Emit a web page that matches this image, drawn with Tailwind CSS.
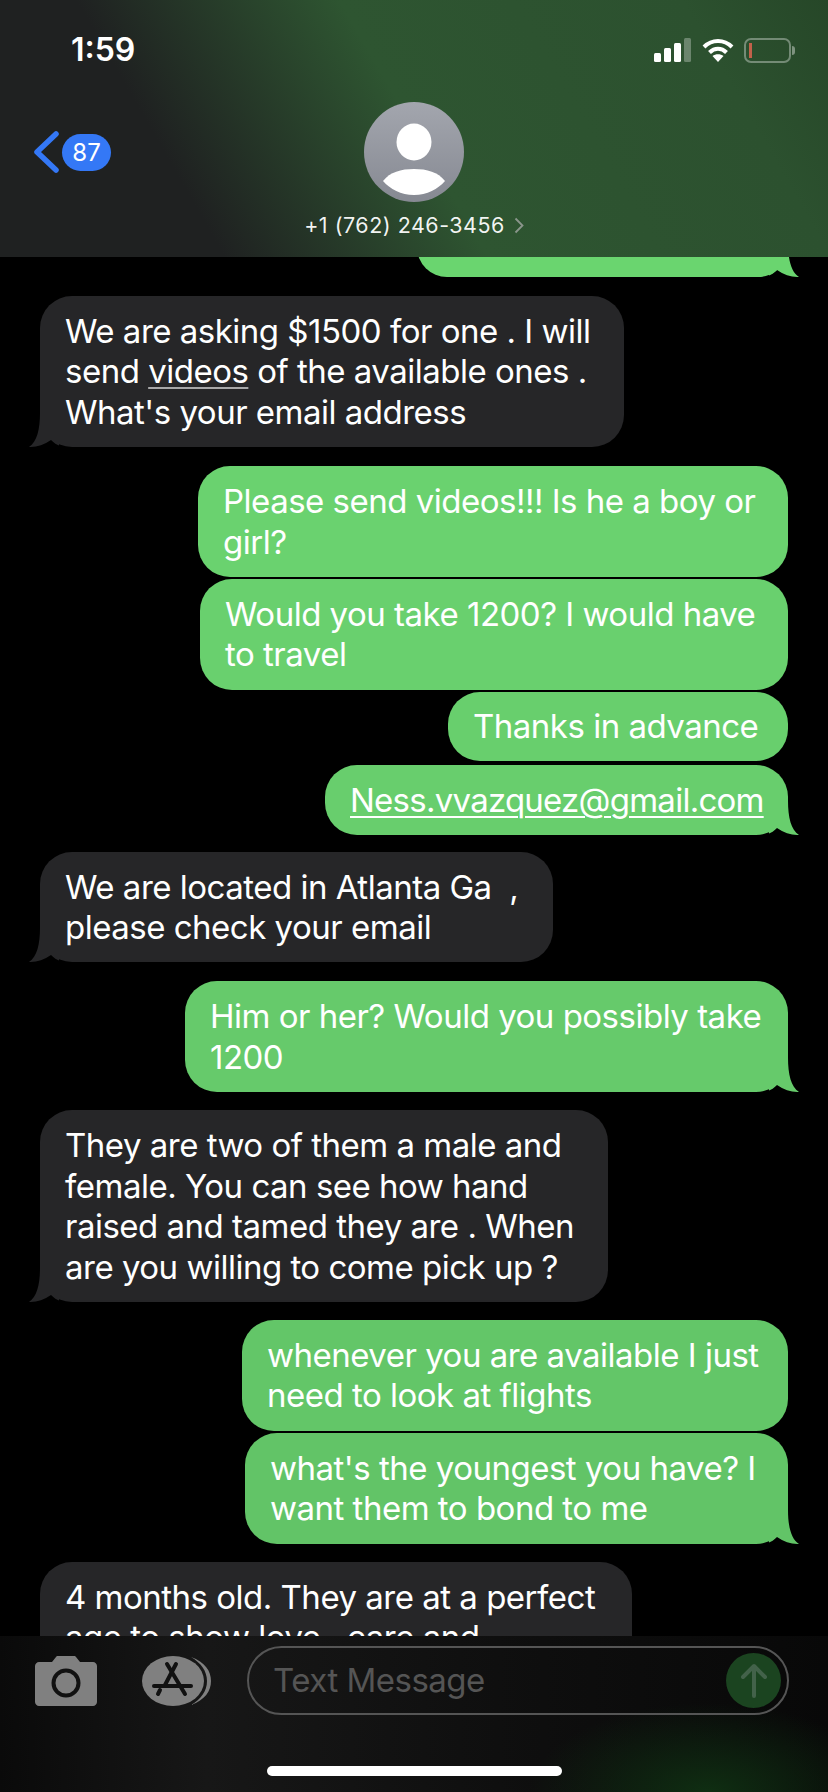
<!DOCTYPE html>
<html lang="en">
<head>
  <meta charset="UTF-8" />
  <meta name="viewport" content="width=device-width, initial-scale=1.0"/>
  <title>Messages</title>
  <script src="https://cdn.jsdelivr.net/npm/@tailwindcss/browser@4"></script>
</head>
<body class="bg-black">
  <svg class="hidden">
    <symbol id="tail" viewBox="0 0 30 34" overflow="visible">
      <path d="M19 0C19 16 22 29 30 34C23 34.500 15 32 8 27C5 30 2 32 0 32.500L0 0Z" fill="currentColor"/>
    </symbol>
  </svg>

  <div class="w-[828px] h-[1792px] flex flex-col overflow-hidden font-['Inter','Liberation_Sans',sans-serif] text-white">

    <!-- Header -->
    <header class="relative z-10 h-[257px] shrink-0 bg-[linear-gradient(60deg,#1f2121_0%,#1f2121_23%,#2e5531_50%,#2c512f_85%,#264728_100%)]">
      <div class="flex items-center justify-between pl-[71px] pr-[37px] pt-[32px]">
        <span class="text-[32px] leading-[36px] font-semibold">1:59</span>
        <div class="flex items-center">
          <svg width="38" height="24" viewBox="0 0 38 24">
            <rect x="0" y="15" width="7" height="9" rx="1.500" fill="#fff"/>
            <rect x="10" y="10" width="7" height="14" rx="1.500" fill="#fff"/>
            <rect x="20" y="5" width="7" height="19" rx="1.500" fill="#fff"/>
            <rect x="30" y="0" width="7" height="24" rx="1.500" fill="#fff" fill-opacity=".3"/>
          </svg>
          <svg class="ml-[10px]" width="32" height="24" viewBox="0 0 32 24" fill="none" stroke="#fff" stroke-width="4">
            <path d="M2 9C10 1 22 1 30 9"/>
            <path d="M7.500 14.500C12.500 9.500 19.500 9.500 24.500 14.500"/>
            <path d="M16 24L10.500 18C13.500 15.500 18.500 15.500 21.500 18Z" fill="#fff" stroke="none"/>
          </svg>
          <div class="ml-[10px] relative w-[47px] h-[25px] rounded-[7px] border-2 border-white/35">
            <div class="absolute left-[3px] top-[3px] bottom-[3px] w-[3px] bg-[#c2614a]"></div>
            <div class="absolute -right-[6px] top-[6px] w-[3px] h-[9px] rounded-r-full bg-white/40"></div>
          </div>
        </div>
      </div>

      <!-- Back + badge -->
      <div class="absolute left-[33px] top-[131px] flex items-center">
        <svg width="26" height="42" viewBox="0 0 26 42" fill="none" stroke="#3478f6" stroke-width="5.500" stroke-linecap="round" stroke-linejoin="round">
          <path d="M23 3L4 21L23 39"/>
        </svg>
        <div class="ml-[3px] w-[49px] h-[37px] rounded-full bg-[#3478f6] text-[24px] leading-[37px] text-center">87</div>
      </div>

      <!-- Contact -->
      <div class="absolute left-0 right-0 top-[102px] flex flex-col items-center">
        <svg width="100" height="100" viewBox="0 0 100 100">
          <defs>
            <linearGradient id="avatar" x1="0" y1="0" x2="0" y2="1">
              <stop offset="0" stop-color="#a3a6ae"/>
              <stop offset="1" stop-color="#868992"/>
            </linearGradient>
          </defs>
          <circle cx="50" cy="50" r="50" fill="url(#avatar)"/>
          <ellipse cx="50" cy="40" rx="17.500" ry="18.500" fill="#fff"/>
          <path d="M19 79C26 70 37 67 50 67C63 67 74 70 81 79C74 87 63 93 50 93C37 93 26 87 19 79Z" fill="#fff"/>
        </svg>
        <div class="mt-[9px] flex items-center text-[21.500px] leading-[28px] tracking-[0.5px] text-white/95">
          <span>+1 (762) 246-3456</span>
          <svg class="ml-[9px]" width="10" height="17" viewBox="0 0 10 17" fill="none" stroke="#8b968c" stroke-width="1.800">
            <path d="M1.500 1.500L8.500 8.500L1.500 15.500"/>
          </svg>
        </div>
      </div>
    </header>

    <!-- Conversation -->
    <main class="flex-1 min-h-0 overflow-hidden flex flex-col text-[33px] leading-[40.400px] tracking-[-0.5px] whitespace-nowrap">
      <div class="relative shrink-0 self-end mr-[40px] -mt-[40px] w-[371px] h-[60px] rounded-[30px] bg-[#6ad56f] text-[#6ad56f]">
        <svg class="absolute -right-[11px] bottom-0 overflow-visible" width="30" height="34"><use href="#tail"/></svg>
      </div>

      <div class="relative shrink-0 self-start ml-[40px] mt-[19px] w-[584px] px-[25px] py-[15px] rounded-[32px] bg-[#262628] text-[#262628]">
        <p class="text-white">We are asking $1500 for one . I will<br>send <span class="underline decoration-2 underline-offset-4 decoration-white/60">videos</span> of the available ones .<br>What's your email address</p>
        <svg class="absolute -left-[11px] bottom-0 overflow-visible -scale-x-100" width="30" height="34"><use href="#tail"/></svg>
      </div>

      <div class="shrink-0 self-end mr-[40px] mt-[19px] w-[590px] px-[25px] py-[15px] rounded-[32px] bg-[#6ad26f]">Please send videos!!! Is he a boy or<br>girl?</div>
      <div class="shrink-0 self-end mr-[40px] mt-[2px] w-[588px] px-[25px] py-[15px] rounded-[32px] bg-[#69d06e]">Would you take 1200? I would have<br>to travel</div>
      <div class="shrink-0 self-end mr-[40px] mt-[2px] w-[340px] px-[25px] py-[14.500px] rounded-[32px] bg-[#68cf6d]">Thanks in advance</div>
      <div class="relative shrink-0 self-end mr-[40px] mt-[4px] w-[463px] px-[25px] py-[14.500px] rounded-[32px] bg-[#68ce6d] text-[#68ce6d]">
        <p class="text-white underline decoration-2 underline-offset-4 tracking-[-0.75px]">Ness.vvazquez@gmail.com</p>
        <svg class="absolute -right-[11px] bottom-0 overflow-visible" width="30" height="34"><use href="#tail"/></svg>
      </div>

      <div class="relative shrink-0 self-start ml-[40px] mt-[17px] w-[513px] px-[25px] py-[15px] rounded-[32px] bg-[#262628] text-[#262628]">
        <p class="text-white">We are located in Atlanta Ga &nbsp;,<br>please check your email</p>
        <svg class="absolute -left-[11px] bottom-0 overflow-visible -scale-x-100" width="30" height="34"><use href="#tail"/></svg>
      </div>

      <div class="relative shrink-0 self-end mr-[40px] mt-[19px] w-[603px] px-[25px] py-[15px] rounded-[32px] bg-[#66ca6b] text-[#66ca6b]">
        <p class="text-white">Him or her? Would you possibly take<br>1200</p>
        <svg class="absolute -right-[11px] bottom-0 overflow-visible" width="30" height="34"><use href="#tail"/></svg>
      </div>

      <div class="relative shrink-0 self-start ml-[40px] mt-[18px] w-[568px] px-[25px] py-[15px] rounded-[32px] bg-[#262628] text-[#262628]">
        <p class="text-white">They are two of them a male and<br>female. You can see how hand<br>raised and tamed they are . When<br>are you willing to come pick up ?</p>
        <svg class="absolute -left-[11px] bottom-0 overflow-visible -scale-x-100" width="30" height="34"><use href="#tail"/></svg>
      </div>

      <div class="shrink-0 self-end mr-[40px] mt-[18px] w-[546px] px-[25px] py-[15px] rounded-[32px] bg-[#63c668]">whenever you are available I just<br>need to look at flights</div>
      <div class="relative shrink-0 self-end mr-[40px] mt-[2px] w-[543px] px-[25px] py-[15px] rounded-[32px] bg-[#62c467] text-[#62c467]">
        <p class="text-white">what's the youngest you have? I<br>want them to bond to me</p>
        <svg class="absolute -right-[11px] bottom-0 overflow-visible" width="30" height="34"><use href="#tail"/></svg>
      </div>

      <div class="shrink-0 self-start ml-[40px] mt-[18px] w-[592px] px-[25px] py-[15px] rounded-[32px] bg-[#262628]">4 months old. They are at a perfect<br>age to show love , care and</div>
    </main>

    <!-- Input bar -->
    <footer class="relative h-[156px] shrink-0 bg-[linear-gradient(90deg,#0a0a0a_0%,#171717_25%,#0f0f0f_60%,#080808_100%)]">
      <div class="absolute right-0 bottom-0 w-[300px] h-[90px] bg-[radial-gradient(ellipse_at_60%_100%,#0f2e12_0%,transparent_70%)]"></div>
      <div class="relative flex items-center pt-[10px] pl-[35px]">
        <svg width="62" height="50" viewBox="0 0 62 50">
          <path d="M4 6H17L21 1C21.500 .4 22 0 23 0H39C40 0 40.500 .4 41 1L45 6H58C60 6 62 8 62 10V46C62 48 60 50 58 50H4C2 50 0 48 0 46V10C0 8 2 6 4 6Z" fill="#808080"/>
          <circle cx="31" cy="27" r="12.500" fill="none" stroke="#111" stroke-width="4"/>
        </svg>
        <svg class="ml-[44px]" width="70" height="50" viewBox="0 0 70 50">
          <path d="M50 1C64 6 70 15 70 25C70 35 64 44 50 49C60 43 66 35 66 25C66 15 60 7 50 1Z" fill="#808080"/>
          <ellipse cx="32" cy="25" rx="31" ry="25" fill="#808080"/>
          <g fill="none" stroke="#111" stroke-width="4" stroke-linecap="round">
            <path d="M35 8L24 29"/>
            <path d="M19 34L17 38"/>
            <path d="M26 8L44 38"/>
            <path d="M13 30H50"/>
          </g>
        </svg>
        <div class="ml-[36px] relative w-[542px] h-[69px] rounded-full border-2 border-[#555555] pl-[24px] text-[33px] tracking-[-0.5px] leading-[65px] text-[#555555]">
          Text Message
          <div class="absolute right-[6px] top-[5px] w-[55px] h-[55px] rounded-full bg-[#1b4420] flex items-center justify-center">
            <svg width="28" height="36" viewBox="0 0 28 36" fill="none" stroke="#43624a" stroke-width="4" stroke-linecap="round" stroke-linejoin="round">
              <path d="M14 33V4M3 14L14 3L25 14"/>
            </svg>
          </div>
        </div>
      </div>
      <div class="absolute left-[267px] top-[130px] w-[295px] h-[10px] rounded-full bg-white"></div>
    </footer>
  </div>
</body>
</html>
